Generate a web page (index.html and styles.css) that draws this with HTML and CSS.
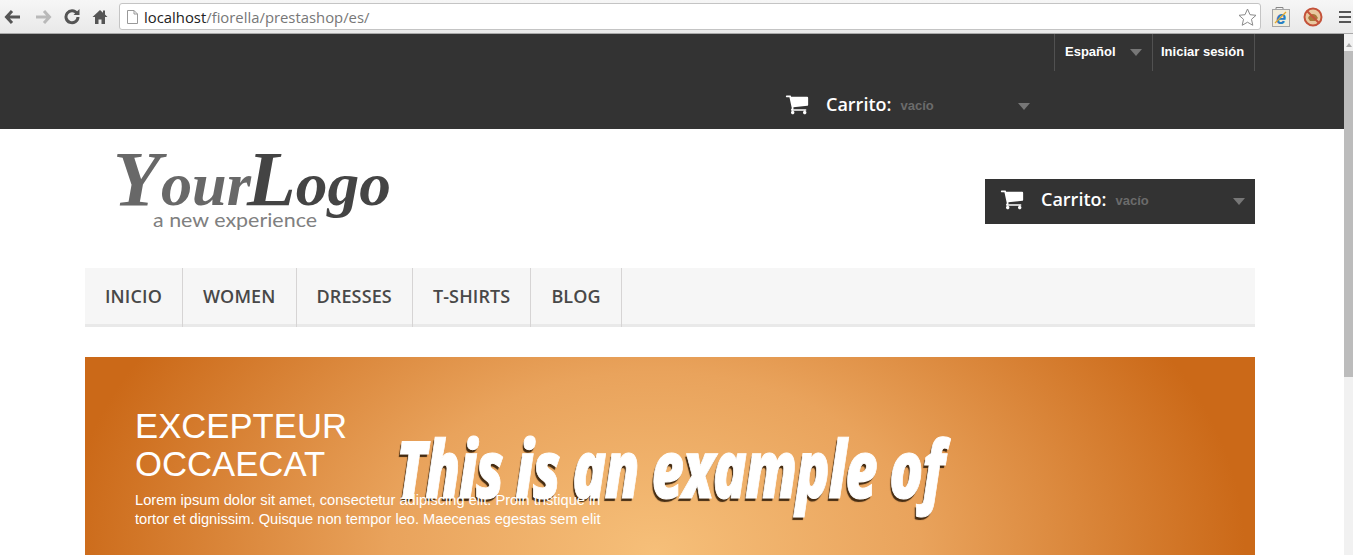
FILE: index.html
```html
<!DOCTYPE html>
<html>
<head>
  <meta charset="UTF-8">
  <title>PrestaShop</title>
  <link rel="stylesheet" href="styles.css">
</head>
<body>

  <svg class="sprites" width="0" height="0">
    <symbol id="cart" viewBox="0 0 1792 1792">
      <path d="M704 1536q0 52-38 90t-90 38-90-38-38-90 38-90 90-38 90 38 38 90zm896 0q0 52-38 90t-90 38-90-38-38-90 38-90 90-38 90 38 38 90zm128-1088v512q0 24-16.5 42.5t-40.5 21.5l-1044 122q13 60 13 70 0 16-24 64h920q26 0 45 19t19 45-19 45-45 19h-1024q-26 0-45-19t-19-45q0-11 8-31.5t16-36 21.5-40 15.5-29.5l-177-823h-204q-26 0-45-19t-19-45 19-45 45-19h256q16 0 28.5 6.5t19.5 15.5 13 24.5 8 26 5.5 29.5h1201q26 0 45 19t19 45z"/>
    </symbol>
  </svg>

  <!-- browser toolbar -->
  <div class="toolbar">
    <div class="nav-buttons">
      <svg class="tool-icon" width="18" height="16" viewBox="0 0 18 16"><path d="M8 2 2.500 8 8 14M3 8h13" fill="none" stroke="#555" stroke-width="3"/></svg>
      <svg class="tool-icon" width="18" height="16" viewBox="0 0 18 16"><path d="M10 2l5.500 6L10 14M15 8H2" fill="none" stroke="#b9b9b9" stroke-width="3"/></svg>
      <svg class="tool-icon" width="16" height="16" viewBox="0 0 16 16"><path d="M13 4.500A6 6 0 1 0 14 8" fill="none" stroke="#555" stroke-width="3"/><path d="M9.500 6H15.500V0z" fill="#555"/></svg>
      <svg class="tool-icon" width="16" height="16" viewBox="0 0 16 16"><path d="M8 1 0.500 8H3v7h3.500v-4.500h3V15H13V8h2.500L13 5.600V1.500h-2v2.200z" fill="#555"/></svg>
    </div>
    <div class="address">
      <svg width="11" height="14" viewBox="0 0 11 14"><path d="M.5.500h6.500l3.500 3.500v9.500H.5zM7 .5V4h3.500" fill="#fff" stroke="#999"/></svg>
      <span class="url"><span class="host">localhost</span>/fiorella/prestashop/es/</span>
      <svg class="star" width="19" height="18" viewBox="0 0 19 18"><path d="M9.500 1l2.500 5.700 6 .6-4.500 4 1.300 6-5.300-3.100-5.300 3.100 1.300-6-4.500-4 6-.6z" fill="#fff" stroke="#8a8a8a"/></svg>
    </div>
    <div class="extensions">
      <svg width="18" height="20" viewBox="0 0 18 20">
        <path d="M4 2.500V.5h7v2" fill="none" stroke="#888"/>
        <rect x=".5" y="2.500" width="17" height="17" fill="#f1eddc" stroke="#a5a5a5"/>
        <text class="ie-glyph" x="9" y="17" text-anchor="middle">e</text>
        <path d="M3 16 14 5" stroke="#e5a92c" stroke-width="1.200"/>
      </svg>
      <svg width="20" height="20" viewBox="0 0 20 20"><circle cx="10" cy="10" r="8.500" fill="#e8c9a0" stroke="#c4523a" stroke-width="2"/><path d="M5 11q3-6 8-3l2 3-3 3H7z" fill="#a8793a"/><path d="M4 4l12 12" stroke="#c4523a" stroke-width="2"/></svg>
      <div class="hamburger"><span></span><span></span><span></span></div>
    </div>
  </div>

  <div class="window">
    <div class="page">

      <header class="top-band">
        <div class="container">
          <div class="top-links">
            <div class="top-link lang">
              <span>Español</span>
              <i class="caret"></i>
            </div>
            <div class="top-link login">Iniciar sesión</div>
          </div>
          <div class="top-cart-row">
            <div class="cart-box">
              <svg class="cart-icon"><use href="#cart"/></svg>
              <b class="cart-label">Carrito:</b>
              <span class="cart-empty">vacío</span>
              <i class="caret"></i>
            </div>
          </div>
        </div>
      </header>

      <div class="container">
        <div class="logo-row">
          <div class="logo">
            <svg width="290" height="90" viewBox="0 0 290 90">
              <text class="logo-your" x="8" y="58" textLength="138" lengthAdjust="spacingAndGlyphs"><tspan class="logo-cap">Y</tspan>our</text>
              <text class="logo-logo" x="142" y="58" textLength="144" lengthAdjust="spacingAndGlyphs"><tspan class="logo-cap">L</tspan>ogo</text>
              <text class="logo-tag" x="48" y="80" textLength="164" lengthAdjust="spacingAndGlyphs">a new experience</text>
            </svg>
          </div>
          <div class="cart-box">
            <svg class="cart-icon"><use href="#cart"/></svg>
            <b class="cart-label">Carrito:</b>
            <span class="cart-empty">vacío</span>
            <i class="caret"></i>
          </div>
        </div>

        <nav class="menu">
          <a>INICIO</a>
          <a>WOMEN</a>
          <a>DRESSES</a>
          <a>T-SHIRTS</a>
          <a>BLOG</a>
        </nav>

        <section class="hero">
          <h2>EXCEPTEUR<br>OCCAECAT</h2>
          <p>Lorem ipsum dolor sit amet, consectetur adipiscing elit. Proin tristique in<br>tortor et dignissim. Quisque non tempor leo. Maecenas egestas sem elit</p>
          <div class="hero-caption">This is an example of</div>
        </section>
      </div>

    </div>

    <div class="scrollbar">
      <i class="scroll-arrow"></i>
      <div class="scroll-thumb"></div>
    </div>
  </div>

</body>
</html>
```

FILE: styles.css
```css
html, body {
  height: 100%;
}

body {
  margin: 0;
  overflow: hidden;
  font-family: "Liberation Sans", Arial, sans-serif;
  background-color: #fff;
}

.sprites {
  display: block;
  height: 0;
}

/* browser toolbar */
.toolbar {
  display: flex;
  align-items: center;
  height: 33px;
  border-bottom: 1px solid #a9a9a9;
  background: linear-gradient(#f6f6f6, #e9e9e9);
}

.nav-buttons {
  display: flex;
  align-items: center;
  gap: 12px;
  width: 119px;
  box-sizing: border-box;
  padding-left: 4px;
}

.address {
  display: flex;
  align-items: center;
  width: 1142px;
  height: 27px;
  box-sizing: border-box;
  padding: 0 3px 0 7px;
  background-color: #fff;
  border: 1px solid #c4c4c4;
  border-radius: 3px;
}

.url {
  margin-left: 6px;
  font-family: "Open Sans", sans-serif;
  font-size: 14.85px;
  color: #777;
}

.host {
  color: #222;
}

.star {
  margin-left: auto;
}

.extensions {
  display: flex;
  align-items: center;
  gap: 13px;
  padding-left: 11px;
}

.ie-glyph {
  font-family: "Liberation Sans", sans-serif;
  font-size: 18px;
  font-weight: bold;
  font-style: italic;
  fill: #2a7fc4;
}

.hamburger {
  display: flex;
  flex-direction: column;
  gap: 3px;
  margin-left: 3px;
}

.hamburger span {
  display: block;
  width: 12px;
  height: 2px;
  background-color: #555;
}

/* page area */
.window {
  display: flex;
  height: 521px;
}

.page {
  flex: 1;
  min-width: 0;
  overflow: hidden;
}

.container {
  width: 1170px;
  margin-left: 85px;
}

.scrollbar {
  width: 9px;
  background-color: #f1f1f1;
}

.scroll-arrow {
  display: block;
  width: 0;
  height: 0;
  margin: 9px auto 0;
  border-left: 3px solid transparent;
  border-right: 3px solid transparent;
  border-bottom: 4px solid #a8a8a8;
}

.scroll-thumb {
  height: 326px;
  margin-top: 4px;
  background-color: #bcbcbc;
}

/* dark header */
.top-band {
  height: 95px;
  background-color: #333;
}

.top-links {
  display: flex;
  justify-content: flex-end;
  height: 37px;
}

.top-link {
  display: flex;
  align-items: center;
  box-sizing: border-box;
  padding-bottom: 2px;
  border-left: 1px solid #515151;
  font-size: 13px;
  font-weight: bold;
  color: #fff;
}

.lang {
  width: 98px;
  padding-left: 10px;
}

.lang .caret {
  margin: 2px 0 0 14px;
}

.login {
  width: 103px;
  padding-left: 8px;
  border-right: 1px solid #515151;
}

.top-cart-row {
  display: flex;
  height: 58px;
  box-sizing: border-box;
  padding: 13px 0 0 685px;
}

/* cart block */
.cart-box {
  display: flex;
  align-items: center;
  flex: none;
  width: 270px;
  height: 45px;
  box-sizing: border-box;
  padding: 0 10px 6px 15px;
  background-color: #333;
}

.cart-icon {
  width: 24px;
  height: 24px;
  fill: #fff;
}

.cart-label {
  margin-left: 17px;
  font-family: "Open Sans", sans-serif;
  font-size: 18px;
  font-weight: 600;
  color: #fff;
}

.cart-empty {
  margin: 3px 0 0 9px;
  font-size: 13px;
  font-weight: bold;
  color: #6b6b6b;
}

.caret {
  display: block;
  width: 0;
  height: 0;
  margin: 6px 0 0 auto;
  border-left: 6px solid transparent;
  border-right: 6px solid transparent;
  border-top: 7px solid #777;
}

/* logo row */
.logo-row {
  display: flex;
  justify-content: space-between;
  align-items: flex-start;
  height: 139px;
  padding-top: 50px;
  box-sizing: border-box;
}

.logo {
  margin: -32px 0 0 20px;
}

.logo svg {
  overflow: visible;
}

.logo text {
  font-family: "Liberation Serif", serif;
  font-style: italic;
  font-weight: bold;
  font-size: 62px;
}

.logo .logo-cap {
  font-size: 78px;
}

.logo .logo-your {
  fill: #686868;
}

.logo .logo-logo {
  fill: #444;
}

.logo .logo-tag {
  font-family: "Lato", sans-serif;
  font-style: normal;
  font-weight: 400;
  font-size: 19px;
  fill: #808080;
}

/* main menu */
.menu {
  display: flex;
  height: 59px;
  box-sizing: border-box;
  background-color: #f6f6f6;
  border-bottom: 3px solid #e9e9e9;
}

.menu a {
  display: flex;
  align-items: center;
  height: 59px;
  box-sizing: border-box;
  padding: 0 20px 4px;
  border-right: 1px solid #d6d4d4;
  font-family: "Open Sans", sans-serif;
  font-size: 18px;
  font-weight: 600;
  letter-spacing: 0.13px;
  color: #484848;
}

/* banner */
.hero {
  position: relative;
  height: 198px;
  margin-top: 30px;
  padding: 50px 0 0 50px;
  box-sizing: border-box;
  overflow: hidden;
  color: #fff;
  background: radial-gradient(ellipse 590px 400px at 570px 195px, #f6bf79 0%, #e9a35c 45%, #cb6918 100%);
}

.hero h2 {
  margin: 0;
  font-size: 34.7px;
  font-weight: normal;
  line-height: 38px;
}

.hero p {
  position: relative;
  z-index: 1;
  margin: 8px 0 0;
  font-size: 14.65px;
  line-height: 19px;
}

.hero-caption {
  position: absolute;
  left: 311px;
  top: 66px;
  font-family: "Open Sans", sans-serif;
  font-size: 80px;
  font-style: italic;
  font-weight: 800;
  line-height: 1.1;
  white-space: nowrap;
  letter-spacing: -2px;
  transform: scaleX(0.7);
  transform-origin: left top;
  -webkit-text-stroke: 1px #fff;
  text-shadow: -2px 3px 1px rgba(50, 30, 10, 0.9);
}
```
